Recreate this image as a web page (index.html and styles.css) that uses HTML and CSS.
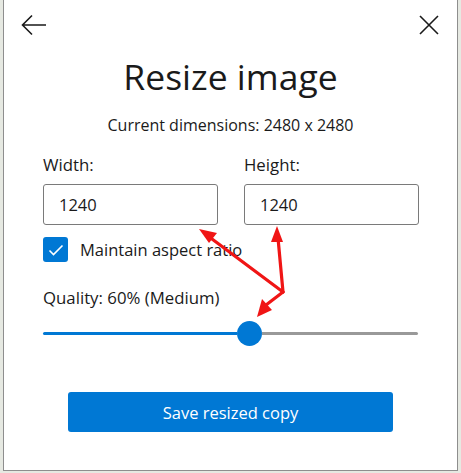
FILE: index.html
```html
<!DOCTYPE html>
<html lang="en">
<head>
  <meta charset="UTF-8" />
  <title>Resize image</title>
  <link rel="stylesheet" href="styles.css">
</head>
<body>

<div class="dialogo">
  <!-- Barra superior -->
  <div class="barra">
    <button class="icono" aria-label="Back">
      <svg width="26" height="22" viewBox="0 0 26 22">
        <path d="M25 11H2M11 1.5L1.5 11 11 20.5" fill="none" stroke="#1a1a1a" stroke-width="1.6"/>
      </svg>
    </button>
    <button class="icono" aria-label="Close">
      <svg width="20" height="20" viewBox="0 0 20 20">
        <path d="M1 1L19 19M19 1L1 19" fill="none" stroke="#1a1a1a" stroke-width="1.6"/>
      </svg>
    </button>
  </div>

  <h1 class="titulo">Resize image</h1>
  <p class="actual">Current dimensions: 2480 x 2480</p>

  <div class="campos">
    <label class="campo">
      <span>Width:</span>
      <input type="text" value="1240">
    </label>
    <label class="campo">
      <span>Height:</span>
      <input type="text" value="1240">
    </label>
  </div>

  <label class="check">
    <span class="caja">
      <svg width="16" height="12" viewBox="0 0 16 12">
        <path d="M1.5 6.5L5.5 10.5 14.5 1.5" fill="none" stroke="#fff" stroke-width="1.6"/>
      </svg>
    </span>
    Maintain aspect ratio
  </label>

  <div class="calidad">Quality: 60% (Medium)</div>
  <div class="slider">
    <div class="relleno" style="width: 194px"></div>
    <div class="pomo"></div>
    <div class="resto"></div>
  </div>

  <button class="guardar">Save resized copy</button>

  <!-- Flechas rojas -->
  <svg class="flechas" width="461" height="473" viewBox="0 0 461 473">
    <g stroke="#f01515" stroke-width="3.2" fill="none" stroke-linecap="round">
      <path d="M283 292L208 236"/>
      <path d="M283 292L278 238"/>
      <path d="M283 292L266 305"/>
    </g>
    <g fill="#f01515">
      <polygon points="199,229 217,233 209,243"/>
      <polygon points="277,226 283,242 271,242"/>
      <polygon points="257,317 262,299 272,310"/>
    </g>
  </svg>
</div>

</body>
</html>
```

FILE: styles.css
```css
* { margin: 0; padding: 0; box-sizing: border-box; }

body {
  background: #e6e9e2;
  padding: 0 3px 2px 3px;
  font-family: 'Open Sans', 'Noto Sans', sans-serif;
  color: #1a1a1a;
  width: 461px;
  height: 473px;
  overflow: hidden;
}

.dialogo {
  position: relative;
  background: #fff;
  border: 1px solid #8e8e8e;
  border-top: none;
  height: 471px;
  padding: 0 39px;
}

.barra {
  display: flex;
  justify-content: space-between;
  align-items: center;
  height: 48px;
  margin: 0 -21px 0 -22px;
  padding-top: 2px;
}

.icono {
  background: none;
  border: none;
  display: flex;
  cursor: pointer;
}

.titulo {
  font-weight: normal;
  font-size: 35.5px;
  text-align: center;
  margin-top: 5px;
  line-height: 46px;
}

.actual {
  text-align: center;
  font-size: 16px;
  margin-top: 15px;
  line-height: 22px;
}

.campos {
  display: grid;
  grid-template-columns: 175px 175px;
  gap: 26px;
  margin-top: 17px;
}

.campo {
  display: flex;
  flex-direction: column;
}

.campo span {
  font-size: 16.8px;
  line-height: 24px;
}

.campo input {
  margin-top: 7px;
  height: 41px;
  border: 1px solid #7a7a7a;
  border-radius: 3px;
  padding-left: 15px;
  font-family: inherit;
  font-size: 16.5px;
  color: #1a1a1a;
}

.check {
  display: flex;
  align-items: center;
  gap: 12px;
  margin-top: 12px;
  font-size: 16.5px;
}

.caja {
  width: 25px;
  height: 25px;
  background: #0078d4;
  border-radius: 3px;
  display: flex;
  align-items: center;
  justify-content: center;
}

.calidad {
  font-size: 16.8px;
  margin-top: 24px;
  line-height: 24px;
}

.slider {
  display: flex;
  align-items: center;
  height: 26px;
  margin-top: 10px;
}

.relleno {
  height: 3px;
  background: #0078d4;
  border-radius: 2px 0 0 2px;
}

.pomo {
  width: 25px;
  height: 25px;
  border-radius: 50%;
  background: #0078d4;
  flex-shrink: 0;
}

.resto {
  flex: 1;
  height: 3px;
  background: #999;
  border-radius: 0 2px 2px 0;
}

.guardar {
  display: block;
  width: 325px;
  height: 40px;
  margin: 46px auto 0;
  background: #0078d4;
  color: #fff;
  border: none;
  border-radius: 3px;
  font-family: inherit;
  font-size: 16.5px;
}

.flechas {
  position: absolute;
  left: -4px;
  top: 0;
  pointer-events: none;
}
```
